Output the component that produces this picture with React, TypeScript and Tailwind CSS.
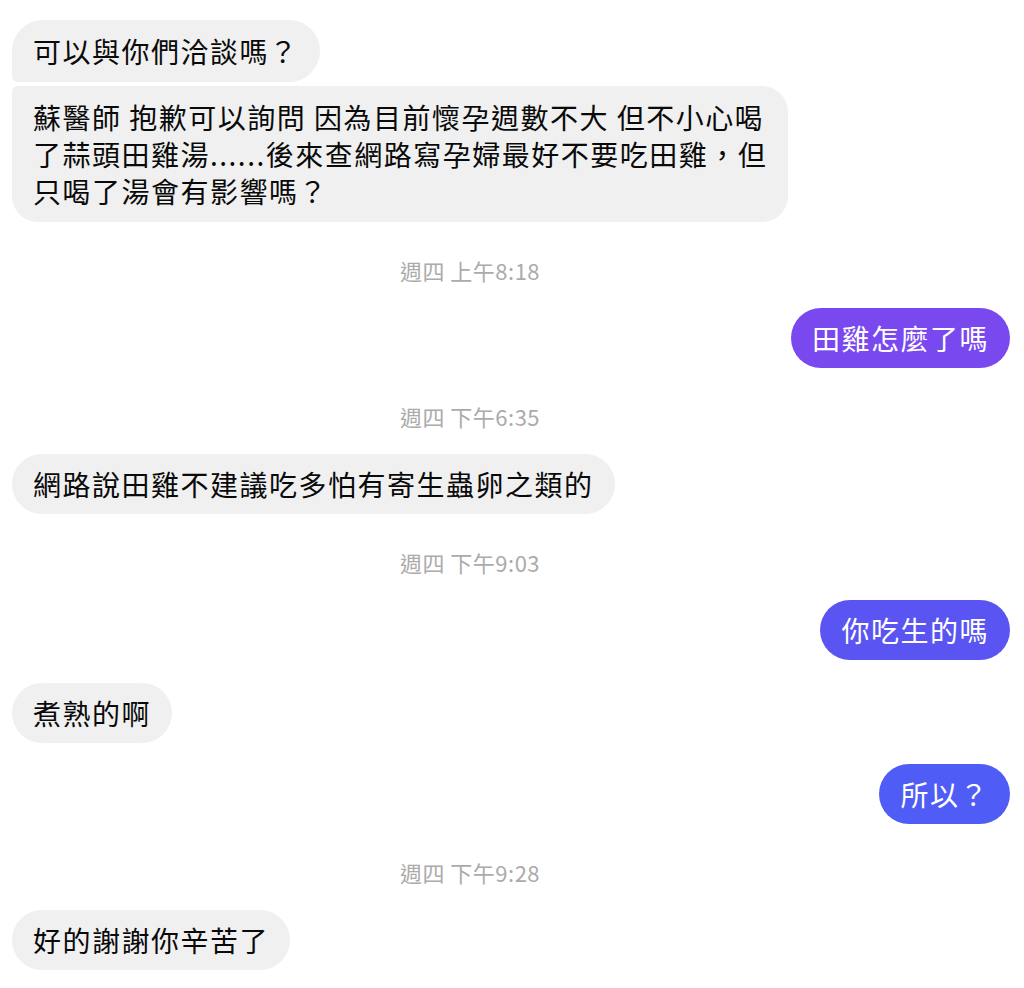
const font = { fontFamily: '"Noto Sans CJK TC", "Noto Sans", sans-serif' };

function Stamp({ children }: { children: string }) {
  return (
    <div className="mt-[34px] mb-[24px] pr-[82px] text-center text-[22px] leading-[28px] tracking-[0.5px] text-[#ababab]">
      {children}
    </div>
  );
}

function In({ children, className = "rounded-[30px] py-[11.5px]" }: { children: React.ReactNode; className?: string }) {
  return (
    <div className="flex justify-start">
      <div
        className={`bg-[#f0f0f0] text-[#0a0a0a] text-[28px] leading-[37px] tracking-[1.5px] px-[21px] ${className}`}
      >
        {children}
      </div>
    </div>
  );
}

function Out({ children, bg }: { children: React.ReactNode; bg: string }) {
  return (
    <div className="flex justify-end">
      <div
        className={`${bg} text-white text-[28px] leading-[37px] tracking-[1.5px] px-[21px] py-[11.5px] rounded-[30px]`}
      >
        {children}
      </div>
    </div>
  );
}

export default function App() {
  return (
    <div className="w-[1024px] h-[988px] bg-white overflow-hidden pl-[12px] pr-[14px] pt-[20px]" style={font}>
      <In className="rounded-[31px] rounded-bl-[6px] py-[12.5px]">可以與你們洽談嗎？</In>
      <div className="h-[4px]" />
      <In className="rounded-[26px] rounded-tl-[6px] py-[12.5px]">
        蘇醫師 抱歉可以詢問 因為目前懷孕週數不大 但不小心喝
        <br />
        了蒜頭田雞湯......後來查網路寫孕婦最好不要吃田雞，但
        <br />
        只喝了湯會有影響嗎？
      </In>
      <Stamp>週四 上午8:18</Stamp>
      <Out bg="bg-[#7a48ef]">田雞怎麼了嗎</Out>
      <Stamp>週四 下午6:35</Stamp>
      <In>網路說田雞不建議吃多怕有寄生蟲卵之類的</In>
      <Stamp>週四 下午9:03</Stamp>
      <Out bg="bg-[#5a55f2]">你吃生的嗎</Out>
      <div className="h-[23px]" />
      <In>煮熟的啊</In>
      <div className="h-[21px]" />
      <Out bg="bg-[#4f5cf6]">所以？</Out>
      <Stamp>週四 下午9:28</Stamp>
      <In>好的謝謝你辛苦了</In>
    </div>
  );
}
